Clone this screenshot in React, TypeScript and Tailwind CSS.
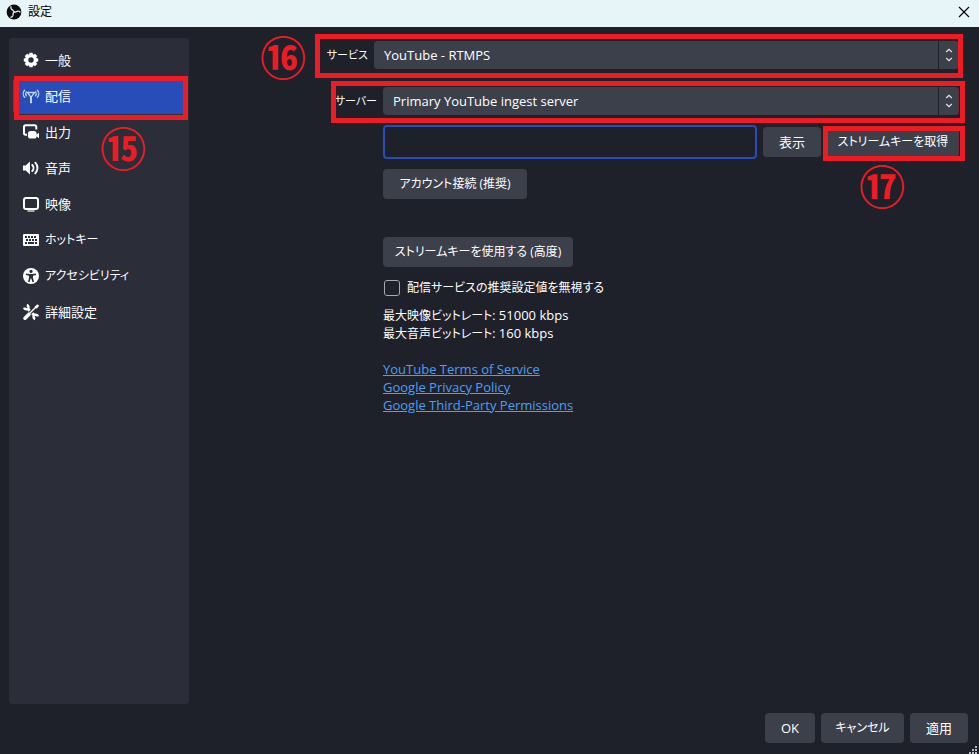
import type { ReactNode } from 'react'

const iconProps = {
  width: 18,
  height: 18,
  viewBox: '0 0 18 18',
  'aria-hidden': true,
  className: 'shrink-0',
}

function GearIcon() {
  const teeth = [0, 45, 90, 135]
  return (
    <svg {...iconProps}>
      <circle cx="9" cy="9" r="4.3" fill="none" stroke="currentColor" strokeWidth="3.2" />
      {teeth.map((deg) => (
        <g key={deg} transform={`rotate(${deg} 9 9)`} fill="currentColor">
          <path d="M6.9 4.5 7.4 1.8h3.2l.5 2.7z" />
          <path d="M6.9 13.5 7.4 16.2h3.2l.5-2.7z" />
        </g>
      ))}
    </svg>
  )
}

function AntennaIcon() {
  return (
    <svg {...iconProps} fill="none" stroke="#bcd6f7" strokeWidth="1.3" strokeLinecap="round">
      <path d="M5.5 5.5h7L9 10.3z" strokeLinejoin="round" />
      <path d="M9 9v7.2" strokeWidth="2" strokeLinecap="butt" />
      <path d="M2.6 3.2c-1.8 2-1.8 5 0 7M15.4 3.2c1.8 2 1.8 5 0 7" />
      <path d="M4.4 4.8c-.9 1.2-.9 2.8 0 4M13.6 4.8c.9 1.2.9 2.8 0 4" />
    </svg>
  )
}

function OutputIcon() {
  return (
    <svg {...iconProps}>
      <path
        d="M5 11.8H3.7A1.8 1.8 0 0 1 2 10V4c0-1 .7-1.8 1.7-1.8h8.8c1 0 1.8.8 1.8 1.8v2.4"
        fill="none"
        stroke="currentColor"
        strokeWidth="2"
      />
      <rect x="6" y="8" width="8.6" height="7.6" rx="2.6" fill="currentColor" />
      <path d="m14 12 3-2.3v5.6L14 13z" fill="currentColor" />
    </svg>
  )
}

function SpeakerIcon() {
  return (
    <svg {...iconProps}>
      <path d="M1 6.4h2.7L7.9 2.5v13l-4.2-3.9H1z" fill="currentColor" />
      <path
        d="M10.3 6c1.6 1.7 1.6 4.3 0 6M13.3 3.7c2.9 3 2.9 7.6 0 10.6"
        fill="none"
        stroke="currentColor"
        strokeWidth="1.9"
        strokeLinecap="round"
      />
    </svg>
  )
}

function MonitorIcon() {
  return (
    <svg {...iconProps}>
      <rect x="2" y="3" width="14" height="11" rx="2" fill="none" stroke="currentColor" strokeWidth="2" />
      <path d="M5.5 16h7" stroke="currentColor" strokeWidth="1.2" />
    </svg>
  )
}

function KeyboardIcon() {
  return (
    <svg {...iconProps}>
      <rect x="1" y="3" width="16" height="12" rx="1" fill="currentColor" />
      <path
        d="M3 6h2m1 0h2m1 0h2m1 0h2M4 9h2m1 0h2m1 0h2m1 0h2M3 12h2m1 0h6m1 0h2"
        stroke="#2b2d38"
        strokeWidth="2"
      />
    </svg>
  )
}

function AccessibilityIcon() {
  return (
    <svg {...iconProps}>
      <circle cx="9" cy="9" r="8" fill="currentColor" />
      <circle cx="9" cy="4.4" r="1.6" fill="#2b2d38" />
      <path
        d="M4 6.6c2 .6 8 .6 10 0v1.3l-3 .8v2l1 4.2h-1.6L9.3 11.6h-.6l-1.1 3.3H6l1-4.2v-2l-3-.8z"
        fill="#2b2d38"
      />
    </svg>
  )
}

function ToolsIcon() {
  return (
    <svg {...iconProps} fill="none" stroke="currentColor">
      <path d="m3 15.2 4-4" strokeWidth="3.6" strokeLinecap="round" />
      <path d="m8 10 6-6" strokeWidth="1.4" />
      <path d="m12.6 3.6 3-2.4 1.5 1.5-2.4 3z" fill="currentColor" stroke="none" />
      <path d="m5.8 5.8 1.9 1.9M10.3 10.3l2 2" strokeWidth="3" />
      <path d="M2 4.6A2.4 2.4 0 0 0 6.4 5 2.4 2.4 0 0 0 4.8 2" strokeWidth="2.4" />
      <path d="M16 13.4a2.4 2.4 0 0 0-4.4-.4 2.4 2.4 0 0 0 1.6 3" strokeWidth="2.4" />
    </svg>
  )
}

function ObsLogo() {
  return (
    <svg width="16" height="16" viewBox="0 0 16 16" aria-hidden="true">
      <circle cx="8" cy="8" r="7.4" fill="#0b0b0b" />
      {[0, 120, 240].map((deg) => (
        <path
          key={deg}
          d="M8 8C7.8 6.4 6.6 6.2 5.6 5.4 4.8 4.7 4.7 3.8 5 2.8"
          transform={`rotate(${deg} 8 8)`}
          fill="none"
          stroke="#d9dfe1"
          strokeWidth="1.4"
          strokeLinecap="round"
        />
      ))}
    </svg>
  )
}

const menu: { label: string; icon: ReactNode; kana?: boolean }[] = [
  { label: '一般', icon: <GearIcon /> },
  { label: '配信', icon: <AntennaIcon /> },
  { label: '出力', icon: <OutputIcon /> },
  { label: '音声', icon: <SpeakerIcon /> },
  { label: '映像', icon: <MonitorIcon /> },
  { label: 'ホットキー', icon: <KeyboardIcon />, kana: true },
  { label: 'アクセシビリティ', icon: <AccessibilityIcon />, kana: true },
  { label: '詳細設定', icon: <ToolsIcon /> },
]

function Highlight({ className }: { className: string }) {
  return <span className={`pointer-events-none absolute border-5 border-[#ed1c24] ${className}`} />
}

function Callout({ children, className }: { children: string; className: string }) {
  return (
    <span
      className={`pointer-events-none absolute flex size-11 items-center justify-center text-[46px] leading-none font-bold text-[#ed1c24] ${className}`}
    >
      {children}
    </span>
  )
}

function Button({ children, className = 'px-4' }: { children: ReactNode; className?: string }) {
  return (
    <button type="button" className={`h-[30px] shrink-0 rounded bg-[#3c404b] whitespace-nowrap ${className}`}>
      {children}
    </button>
  )
}

function Select({ id, value }: { id: string; value: string }) {
  return (
    <div className="relative min-w-0 flex-1">
      <select id={id} className="block h-7 w-full appearance-none rounded bg-[#3c404b] pr-8 pl-2.5">
        <option>{value}</option>
      </select>
      <span className="pointer-events-none absolute inset-y-0 right-0 flex w-[21px] items-center justify-center border-l border-[#1f212a]">
        <svg width="8" height="14" viewBox="0 0 8 14" fill="none" stroke="#e4e5e8" strokeWidth="1.2" aria-hidden="true">
          <path d="m1.2 4 2.8-2.6L6.8 4M1.2 10 4 12.6 6.8 10" />
        </svg>
      </span>
    </div>
  )
}

export default function App() {
  return (
    <div className="flex min-h-screen flex-col bg-[#1f212a] font-['Open_Sans','Noto_Sans_CJK_JP',sans-serif] text-[13px] leading-[18px] text-white [font-feature-settings:'palt']">
      <header className="flex h-[27px] items-center bg-[#e8f5f8] pr-2 pb-1 pl-1.5 text-black">
        <ObsLogo />
        <h1 className="ml-1.5 text-xs">設定</h1>
        <button type="button" aria-label="閉じる" className="ml-auto">
          <svg width="14" height="14" viewBox="0 0 14 14" stroke="currentColor" strokeWidth="1.1" aria-hidden="true">
            <path d="m2 2 10 10M12 2 2 12" />
          </svg>
        </button>
      </header>

      <div className="flex flex-1 pt-[11px] pr-5 pl-[9px]">
        <nav className="w-[180px] shrink-0 rounded bg-[#2b2d38] px-1 py-1">
          <ul>
            {menu.map((item, i) => (
              <li key={item.label} className="relative">
                <button
                  type="button"
                  className={`flex h-9 w-full items-center gap-[5px] rounded pl-[9px] text-left ${i === 1 ? 'bg-[#284cb8]' : ''} ${item.kana ? 'text-xs' : ''}`}
                >
                  {item.icon}
                  {item.label}
                </button>
                {i === 1 && (
                  <>
                    <Highlight className="-top-0.5 right-[-3px] -bottom-1.5 left-px" />
                    <Callout className="top-12 left-[88px]">⑮</Callout>
                  </>
                )}
              </li>
            ))}
          </ul>
        </nav>

        <main className="min-w-0 flex-1 pt-[3px]">
          <div className="relative flex gap-1.5">
            <label htmlFor="service" className="w-[179px] py-[5px] text-right text-[11px]">
              サービス
            </label>
            <Select id="service" value="YouTube - RTMPS" />
            <Highlight className="-top-[7px] right-[-4px] -bottom-[9px] left-[126px]" />
            <Callout className="-top-1.5 left-[72px]">⑯</Callout>
          </div>

          <div className="relative mt-[18px] flex gap-1.5">
            <label htmlFor="server" className="w-[188px] py-[5px] text-right text-[11px]">
              サーバー
            </label>
            <Select id="server" value="Primary YouTube ingest server" />
            <Highlight className="-top-1.5 right-[-6px] -bottom-2 left-[142px]" />
          </div>

          <div className="mt-2.5 ml-[194px]">
            <div className="flex items-center gap-1.5">
              <input
                type="password"
                aria-label="ストリームキー"
                className="h-[34px] min-w-0 flex-1 rounded border-2 border-[#284cb8] bg-transparent px-2 outline-none"
              />
              <Button>表示</Button>
              <div className="relative">
                <Button className="w-[132px] text-xs">ストリームキーを取得</Button>
                <Highlight className="-top-px right-[-6px] -bottom-1 -left-1" />
                <Callout className="top-[37px] left-[33px]">⑰</Callout>
              </div>
            </div>

            <div className="mt-2.5">
              <Button className="w-36 text-xs">アカウント接続 (推奨)</Button>
            </div>
            <div className="mt-[38px]">
              <Button className="w-[190px] text-xs">ストリームキーを使用する (高度)</Button>
            </div>

            <label className="mt-3 flex items-center gap-[7px] pl-px text-xs/[18px]">
              <input type="checkbox" className="size-4 appearance-none rounded-[3px] border border-[#a5a7ad] bg-[#1f212a]" />
              配信サービスの推奨設定値を無視する
            </label>

            <p className="mt-[9px]">
              <span className="text-xs/3">最大映像ビットレート:</span> 51000 kbps
              <br />
              <span className="text-xs/3">最大音声ビットレート:</span> 160 kbps
            </p>

            <ul className="mt-[18px] text-[#4c9ff5] underline">
              <li><a href="#terms">YouTube Terms of Service</a></li>
              <li><a href="#privacy">Google Privacy Policy</a></li>
              <li><a href="#permissions">Google Third-Party Permissions</a></li>
            </ul>
          </div>
        </main>
      </div>

      <footer className="relative flex justify-end gap-1.5 pt-[9px] pr-[11px] pb-[11px]">
        <Button>OK</Button>
        <Button className="w-[83px] text-xs">キャンセル</Button>
        <Button>適用</Button>
        <svg className="absolute right-0.5 bottom-0" width="9" height="8" viewBox="0 0 9 8" fill="#b9babf" aria-hidden="true">
          <path d="M7 0h2v2H7zM4 3h2v2H4zM7 3h2v2H7zM1 6h2v2H1zM4 6h2v2H4zM7 6h2v2H7z" />
        </svg>
      </footer>
    </div>
  )
}
